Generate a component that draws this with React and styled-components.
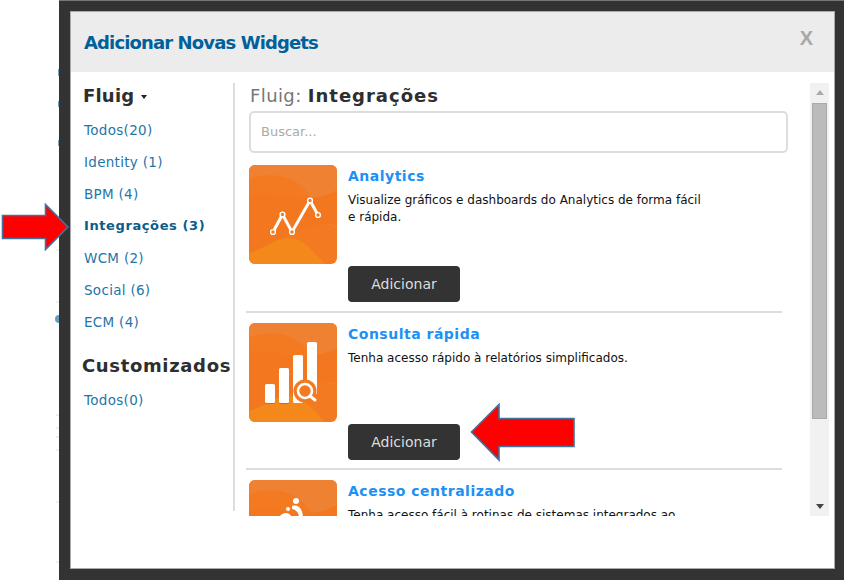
import React from "react";
import styled, { createGlobalStyle } from "styled-components";

const Global = createGlobalStyle`
  html, body { margin: 0; padding: 0; background: #fff; }
  * { box-sizing: border-box; }
`;
const Page = styled.div`
  position: relative; width: 844px; height: 581px; overflow: hidden;
  display: flex; background: #fff; font-family: "DejaVu Sans", Verdana, sans-serif;
`;
const Gutter = styled.svg`width: 59px; height: 581px; flex: none;`;
const Frame = styled.div`
  width: 785px; height: 580px; padding: 12px 10px 11px 12px; background: #333;
  border-top: 1px solid #777; display: flex;
`;
const Modal = styled.div`
  width: 763px; height: 556px; margin-top: -1px; background: #fff; display: flex; flex-direction: column;
  box-shadow: 0 0 0 1px #aaa;
`;
const Header = styled.header`
  height: 60px; flex: none; background: #ececec; display: flex; align-items: center;
  justify-content: space-between; padding: 0 21px 0 13px;
`;
const Title = styled.h1`
  margin: 0; font: bold 18px "DejaVu Sans", sans-serif; letter-spacing: -0.87px; color: #00609a;
`;
const Close = styled.span`
  font: bold 20px "Liberation Sans", sans-serif; color: #a8a8a8; margin-top: -7px;
`;
const Body = styled.div`display: flex; height: 433px; margin-top: 11px;`;
const Side = styled.nav`
  width: 164px; height: 428px; flex: none; border-right: 2px solid #ddd;
  display: flex; flex-direction: column; padding-left: 13px;
`;
const SideHead = styled.h2`
  margin: ${p => p.$top}px 0 0 ${p => p.$left}px; font: bold 18px "DejaVu Sans", sans-serif; line-height: 24px;
  color: #2e2e2e; white-space: nowrap; display: flex; align-items: center; letter-spacing: ${p => p.$ls}px;
`;
const Caret = styled.i`
  width: 0; height: 0; margin: 2px 0 0 7px; border: 3px solid transparent; border-top: 4px solid #222; border-bottom: 0;
`;
const SideLink = styled.a`
  display: block; height: 32px; line-height: 32px; letter-spacing: ${p => (p.$active ? 0.6 : 0.3)}px;
  white-space: nowrap; font-size: ${p => (p.$active ? 13 : 13.5)}px;
  color: ${p => (p.$active ? "#0b5c8c" : "#1f75a6")}; font-weight: ${p => (p.$active ? "bold" : "normal")};
`;
const Links = styled.div`margin-top: ${p => p.$top}px;`;
const Main = styled.main`
  width: 575px; height: 433px; flex: none; overflow: hidden; padding-left: 11px;
`;
const Crumb = styled.div`
  margin: 1px 0 0 4px; height: 24px; line-height: 24px; font-size: 18px; color: #777; white-space: nowrap; letter-spacing: 0.4px;
`;
const CrumbStrong = styled.b`color: #2e2e2e; letter-spacing: 1px;`;
const Search = styled.div`
  width: 539px; height: 42px; margin: 3px 0 2px 3px; border: 2px solid #ddd; border-radius: 5px;
  padding-left: 10px; line-height: 38px; font-size: 13px; color: #aaa;
`;
const Item = styled.article`
  width: 536px; height: 157.5px; padding: 10px 0 0 3px; display: flex; gap: 11px;
  border-bottom: 2px solid #ddd;
`;
const Thumb = styled.svg`width: 88px; height: 99px; flex: none; display: block;`;
const Info = styled.div`display: flex; flex-direction: column; height: 137px; flex: 1;`;
const ItemTitle = styled.h3`
  margin: 0; height: 22px; font: bold 14px/22px "DejaVu Sans", sans-serif;
  letter-spacing: 0.5px; color: #1c91f5;
`;
const Desc = styled.p`
  margin: 5px 0 0; width: 360px; font-size: 12px; line-height: 17px; color: #111;
`;
const Add = styled.button`
  margin-top: auto; width: 112px; height: 36px; border: 0; border-radius: 4px; background: #333;
  color: #ddd; font: 14px "DejaVu Sans", sans-serif; letter-spacing: 0;
`;
const Scroll = styled.div`
  position: relative; width: 19px; height: 433px; flex: none; background: #f1f1f1;
  display: flex; flex-direction: column; align-items: center; justify-content: space-between; padding: 7px 0;
`;
const ScrollThumb = styled.div`
  position: absolute; left: 2px; top: 20px; width: 15px; height: 316px; background: #bbb; border: 1px solid #aaa;
`;
const Tri = styled.i`
  width: 0; height: 0; border-left: 4px solid transparent; border-right: 4px solid transparent;
  ${p => (p.$up ? "border-bottom: 5px solid #aaa;" : "border-top: 5px solid #444;")}
`;
const Arrow = styled.svg`position: absolute; left: ${p => p.$x}px; top: ${p => p.$y}px;`;

function Art({ id, children }) {
  return (
    <Thumb viewBox="0 0 88 99">
      <defs>
        <clipPath id={id}><rect width="88" height="99" rx="6" /></clipPath>
      </defs>
      <g clipPath={`url(#${id})`}>
        <rect width="88" height="99" fill="#f37a20" />
        <path d="M0 14C30 4 55 14 66 40C74 58 80 62 88 62V0H0Z" fill="#ef8232" />
        <path d="M0 30C25 22 50 45 88 25V60C60 55 25 80 0 88Z" fill="#f3771f" />
        <path d="M0 88C15 84 25 74 38 73C55 72 65 88 76 99H0Z" fill="#f4881a" />
        {children}
      </g>
    </Thumb>
  );
}

const Items = [
  {
    t: "Analytics",
    d: "Visualize gráficos e dashboards do Analytics de forma fácil e rápida.",
    art: (
      <Art id="a">
        <path d="M24 67L33.5 49.5L43 67L61 35.5L69 50" fill="none" stroke="#fff" strokeWidth="3" />
        {[[24,67],[33.5,49.5],[43,67],[61,35.5],[69,50]].map(([x,y]) => (
          <circle key={x} cx={x} cy={y} r="2.4" fill="#f27a22" stroke="#fff" strokeWidth="1.4" />
        ))}
      </Art>
    ),
  },
  {
    t: "Consulta rápida",
    d: "Tenha acesso rápido à relatórios simplificados.",
    art: (
      <Art id="b">
        <rect x="16" y="62" width="10" height="19" rx="1.5" fill="#d9671a" />
        <rect x="30" y="46" width="10" height="35" rx="1.5" fill="#d9671a" />
        <rect x="16" y="61" width="10" height="19" rx="1.5" fill="#fff" />
        <rect x="30" y="45" width="10" height="35" rx="1.5" fill="#fff" />
        <rect x="44" y="32" width="10" height="48" rx="1.5" fill="#fff" />
        <rect x="58" y="19" width="10" height="52" rx="1.5" fill="#fff" />
        <circle cx="56" cy="68" r="11.5" fill="#f27a22" />
        <circle cx="56" cy="68" r="7" fill="none" stroke="#fff" strokeWidth="2.6" />
        <path d="M61 73L66 77" stroke="#fff" strokeWidth="3" strokeLinecap="round" />
      </Art>
    ),
  },
  {
    t: "Acesso centralizado",
    d: "Tenha acesso fácil à rotinas de sistemas integrados ao",
    art: (
      <Art id="c">
        <circle cx="47" cy="21" r="3" fill="#fff" />
        <path d="M43 26C50 24 54 30 54 38H50C50 32 47 30 43 29Z" fill="#fff" />
        <circle cx="39" cy="29" r="2" fill="#fff" />
        <path d="M31 36C34 32 40 32 42 36Z" fill="#fff" />
      </Art>
    ),
  },
];

export default function App() {
  return (
    <Page>
      <Global />
      <Gutter viewBox="0 0 59 581">
        <path d="M58 69h1v7h-1zM58 101h1v6h-1zM58 140h1v6h-1z" fill="#7aa8c4" />
        <path d="M59 315a4 4 0 0 0 0 8z" fill="#6a9cbd" />
        <path d="M56 250h3M56 302h3M56 415h3M56 428h3M56 437h3M56 450h3M56 502h3M56 562h3" stroke="#ddd" />
      </Gutter>
      <Frame>
        <Modal>
          <Header>
            <Title>Adicionar Novas Widgets</Title>
            <Close>X</Close>
          </Header>
          <Body>
            <Side>
              <SideHead $top={1} $left={-1} $ls={0.2}>Fluig<Caret /></SideHead>
              <Links $top={6}>
                <SideLink>Todos(20)</SideLink>
                <SideLink>Identity (1)</SideLink>
                <SideLink>BPM (4)</SideLink>
                <SideLink $active>Integrações (3)</SideLink>
                <SideLink>WCM (2)</SideLink>
                <SideLink>Social (6)</SideLink>
                <SideLink>ECM (4)</SideLink>
              </Links>
              <SideHead $top={16} $left={-2} $ls={0.65}>Customizados</SideHead>
              <Links $top={6}><SideLink>Todos(0)</SideLink></Links>
            </Side>
            <Main>
              <Crumb>Fluig: <CrumbStrong>Integrações</CrumbStrong></Crumb>
              <Search>Buscar...</Search>
              {Items.map(i => (
                <Item key={i.t}>
                  {i.art}
                  <Info>
                    <ItemTitle>{i.t}</ItemTitle>
                    <Desc>{i.d}</Desc>
                    <Add>Adicionar</Add>
                  </Info>
                </Item>
              ))}
            </Main>
            <Scroll>
              <Tri $up />
              <ScrollThumb />
              <Tri />
            </Scroll>
          </Body>
        </Modal>
      </Frame>
      <Arrow $x={1} $y={203} width="69" height="48" viewBox="0 0 69 48">
        <path d="M1.5 12.5H44.5V1.5L67 24L44.5 46.5V35.5H1.5Z" fill="#f00" stroke="#41719c" strokeWidth="1.6" />
      </Arrow>
      <Arrow $x={470} $y={403} width="106" height="59" viewBox="0 0 106 59">
        <path d="M104 15.5H29V1.5L1.5 29L29 57V43.5H104Z" fill="#f00" stroke="#41719c" strokeWidth="1.6" />
      </Arrow>
    </Page>
  );
}
